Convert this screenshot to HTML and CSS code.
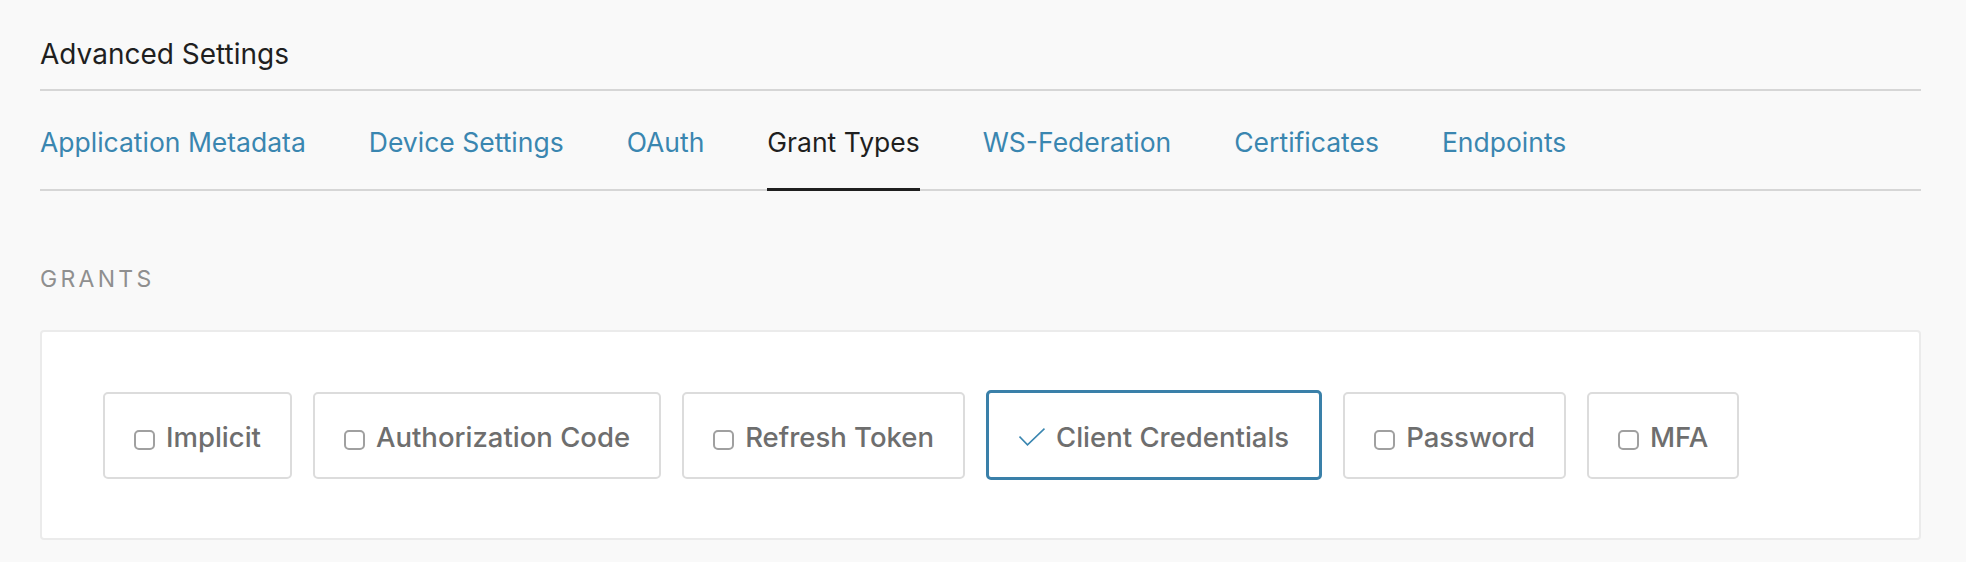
FILE: index.html
```html
<!DOCTYPE html>
<html lang="en">
<head>
<meta charset="utf-8">
<title>Advanced Settings</title>
<link rel="stylesheet" href="styles.css">
</head>
<body>
<div class="page">
  <h2 class="title">Advanced Settings</h2>
  <nav class="tabs">
    <a class="tab">Application Metadata</a>
    <a class="tab">Device Settings</a>
    <a class="tab">OAuth</a>
    <a class="tab active">Grant Types</a>
    <a class="tab">WS-Federation</a>
    <a class="tab">Certificates</a>
    <a class="tab">Endpoints</a>
  </nav>
  <div class="section-label">GRANTS</div>
  <div class="panel">
    <div class="grants">
      <div class="grant"><span class="box"></span><span class="label">Implicit</span></div>
      <div class="grant"><span class="box"></span><span class="label">Authorization Code</span></div>
      <div class="grant"><span class="box"></span><span class="label">Refresh Token</span></div>
      <div class="grant selected"><svg class="check" width="26" height="18" viewBox="0 0 26 18"><polyline points="0.5,8.5 8.5,16.8 25.5,0.7" fill="none" stroke="#3a86b0" stroke-width="1.6"/></svg><span class="label">Client Credentials</span></div>
      <div class="grant"><span class="box"></span><span class="label">Password</span></div>
      <div class="grant"><span class="box"></span><span class="label">MFA</span></div>
    </div>
  </div>
</div>
</body>
</html>
```
FILE: styles.css
```css
html, body {
  margin: 0;
  padding: 0;
  background: #f9f9f9;
}
body {
  font-family: Inter, "Liberation Sans", Arial, sans-serif;
}
.page {
  padding: 0 45px 0 40px;
}
.title {
  margin: 0;
  padding: 36px 0 17px;
  font-size: 28px;
  line-height: 36px;
  font-weight: 400;
  color: #1f1f1f;
  border-bottom: 2px solid #d6d6d6;
}
.tabs {
  display: flex;
  gap: 63px;
  border-bottom: 2px solid #d6d6d6;
}
.tab {
  padding: 33px 0 28px;
  margin-bottom: -2px;
  font-size: 26.5px;
  line-height: 36px;
  color: #3a86b0;
  border-bottom: 3px solid transparent;
  cursor: pointer;
}
.tab.active {
  color: #1f1f1f;
  border-bottom-color: #1f1f1f;
}
.section-label {
  margin-top: 73px;
  font-size: 23px;
  line-height: 30px;
  letter-spacing: 3.3px;
  color: #8f8f8f;
}
.panel {
  margin-top: 36px;
  background: #ffffff;
  border: 2px solid #ebebeb;
  border-radius: 4px;
  padding: 58px 61px;
}
.grants {
  display: flex;
  align-items: center;
  gap: 21px;
}
.grant {
  box-sizing: border-box;
  height: 87px;
  display: flex;
  align-items: center;
  padding: 4px 29px 0;
  border: 2px solid #dcdcdc;
  border-radius: 5px;
  background: #ffffff;
}
.grant.selected {
  height: 90px;
  padding: 4px 30px 0;
  border: 3px solid #3a80a9;
}
.box {
  box-sizing: border-box;
  width: 21px;
  height: 20px;
  margin: 5px 11px 0 0;
  border: 2px solid #a0a0a0;
  border-radius: 5px;
}
.check {
  margin-right: 11px;
}
.label {
  font-size: 27.5px;
  line-height: 35px;
  font-weight: 500;
  color: #6e6e6e;
}
```
